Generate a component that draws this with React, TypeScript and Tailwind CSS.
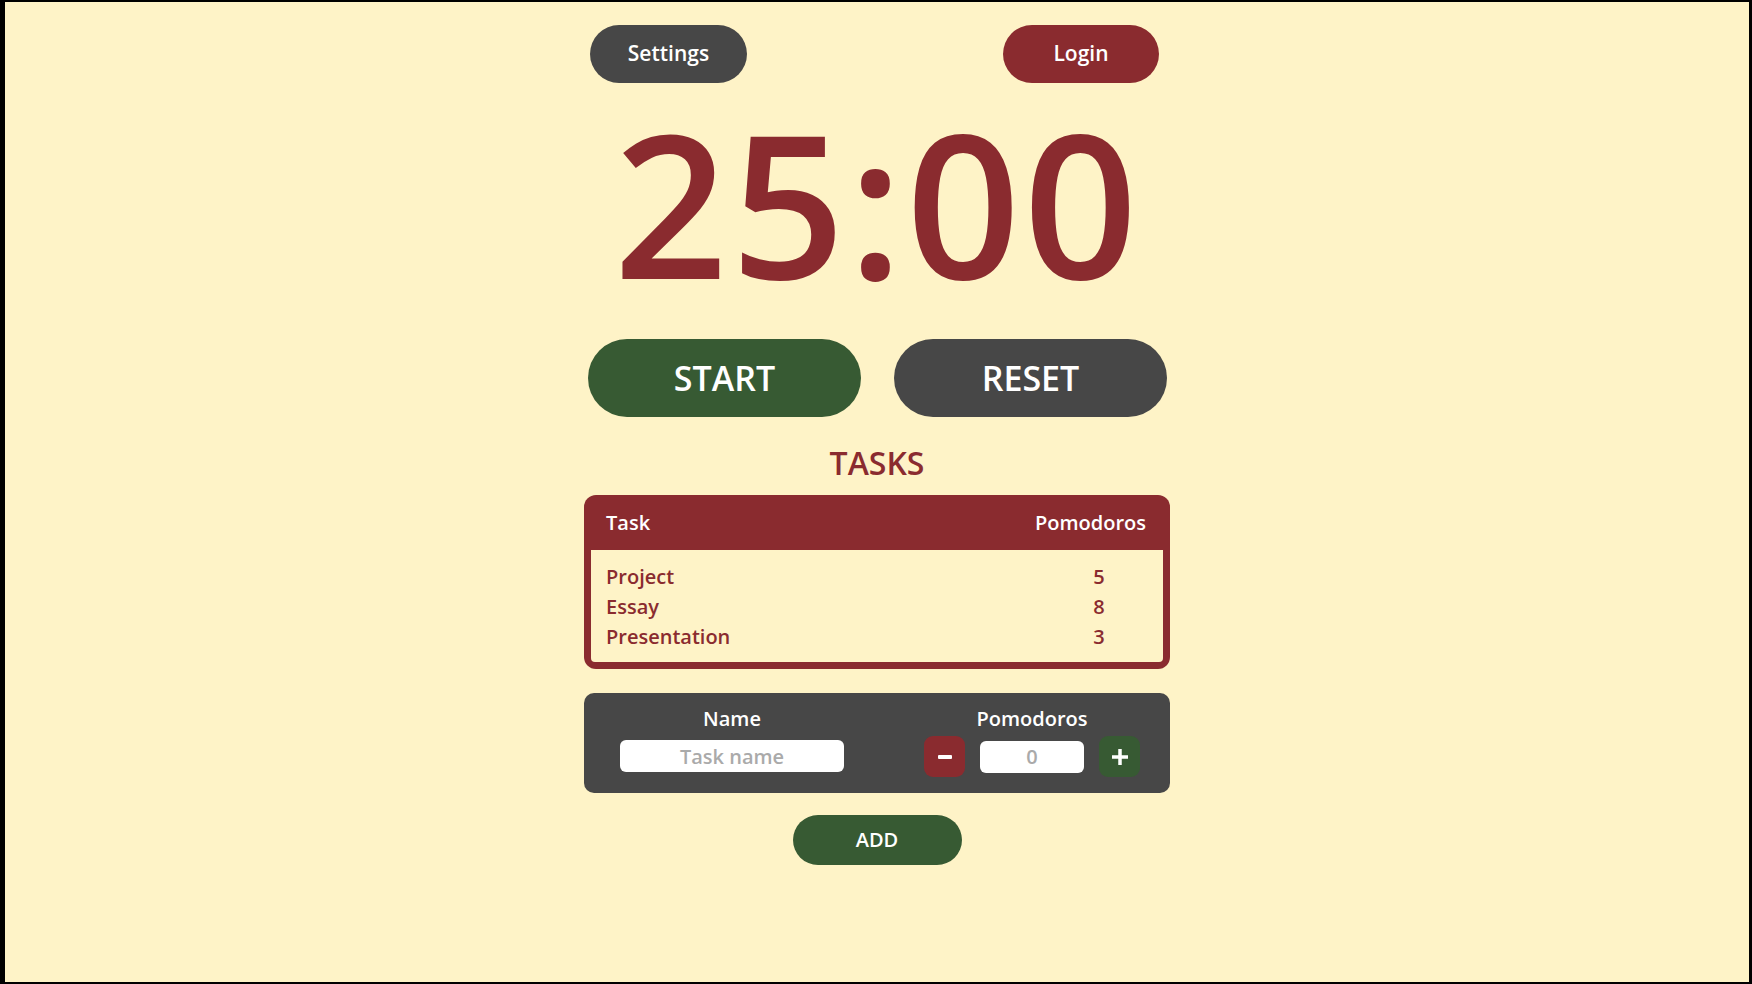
import React from 'react'

const tasks = [
  { name: 'Project', count: 5 },
  { name: 'Essay', count: 8 },
  { name: 'Presentation', count: 3 },
]

export default function App() {
  return (
    <div className="h-screen bg-black pt-[2px] pb-[2px] pl-[5px] pr-[3px]">
      <div
        className="h-full bg-[#fef3c7] flex flex-col items-center"
        style={{ fontFamily: '"Open Sans", "Noto Sans", sans-serif' }}
      >
        <div className="w-[586px] flex flex-col items-center">
          {/* top bar */}
          <div className="w-full flex justify-between pl-[6px] pr-[11px] mt-[23px]">
            <button className="w-[157px] h-[58px] rounded-full bg-[#474747] text-white text-[21px] font-semibold">
              Settings
            </button>
            <button className="w-[156px] h-[58px] rounded-full bg-[#8a2b2f] text-white text-[21px] font-semibold">
              Login
            </button>
          </div>

          {/* timer */}
          <div className="text-[200px] font-semibold leading-none text-[#8a2b2f] mt-[19px] tracking-[3px]">
            25:00
          </div>

          {/* controls */}
          <div className="flex gap-[33px] mt-[37px] pl-[4px] pr-[3px] w-full">
            <button className="w-[273px] h-[78px] rounded-full bg-[#375a33] text-white text-[34px] font-semibold">
              START
            </button>
            <button className="w-[273px] h-[78px] rounded-full bg-[#474747] text-white text-[34px] font-semibold">
              RESET
            </button>
          </div>

          <h2 className="text-[32px] font-semibold text-[#8a2b2f] mt-[24px] leading-[44px]">TASKS</h2>

          {/* task table */}
          <div className="w-full mt-[10px] rounded-[12px] bg-[#8a2b2f] p-[7px] pt-0">
            <div className="h-[55px] flex items-center justify-between pl-[15px] pr-[17px] text-white text-[20px] font-semibold">
              <span>Task</span>
              <span>Pomodoros</span>
            </div>
            <div className="bg-[#fef3c7] rounded-b-[4px] pt-[12px] pb-[10px] pl-[15px] pr-[17px] text-[#8a2b2f] text-[20px] font-semibold">
              {tasks.map((t) => (
                <div key={t.name} className="flex justify-between leading-[30px]">
                  <span>{t.name}</span>
                  <span className="w-[40px] text-center mr-[27px]">{t.count}</span>
                </div>
              ))}
            </div>
          </div>

          {/* new task form */}
          <div className="w-full mt-[24px] h-[100px] rounded-[10px] bg-[#474747] flex justify-between pl-[36px] pr-[30px] pt-[12px]">
            <div className="flex flex-col items-center">
              <label className="text-white text-[20px] font-semibold leading-[28px]">Name</label>
              <input
                placeholder="Task name"
                className="mt-[7px] w-[224px] h-[32px] rounded-[6px] bg-white text-center text-[20px] font-semibold placeholder:text-[#aaaaaa] outline-none"
              />
            </div>
            <div className="flex flex-col items-center">
              <label className="text-white text-[20px] font-semibold leading-[28px]">Pomodoros</label>
              <div className="flex items-center gap-[15px] mt-[3px]">
                <button className="w-[41px] h-[41px] rounded-[9px] bg-[#8a2b2f] flex items-center justify-center">
                  <span className="block w-[14px] h-[4px] rounded-[1px] bg-white" />
                </button>
                <input
                  value="0"
                  readOnly
                  className="w-[104px] h-[32px] rounded-[6px] bg-white text-center text-[20px] font-semibold text-[#aaaaaa] outline-none"
                />
                <button className="w-[41px] h-[41px] rounded-[9px] bg-[#375a33] flex items-center justify-center">
                  <svg width="20" height="20" viewBox="0 0 20 20">
                    <path d="M10 2v16M2 10h16" stroke="white" strokeWidth="3.5" />
                  </svg>
                </button>
              </div>
            </div>
          </div>

          <button className="mt-[22px] w-[169px] h-[50px] rounded-full bg-[#375a33] text-white text-[20px] font-semibold">
            ADD
          </button>
        </div>
      </div>
    </div>
  )
}
